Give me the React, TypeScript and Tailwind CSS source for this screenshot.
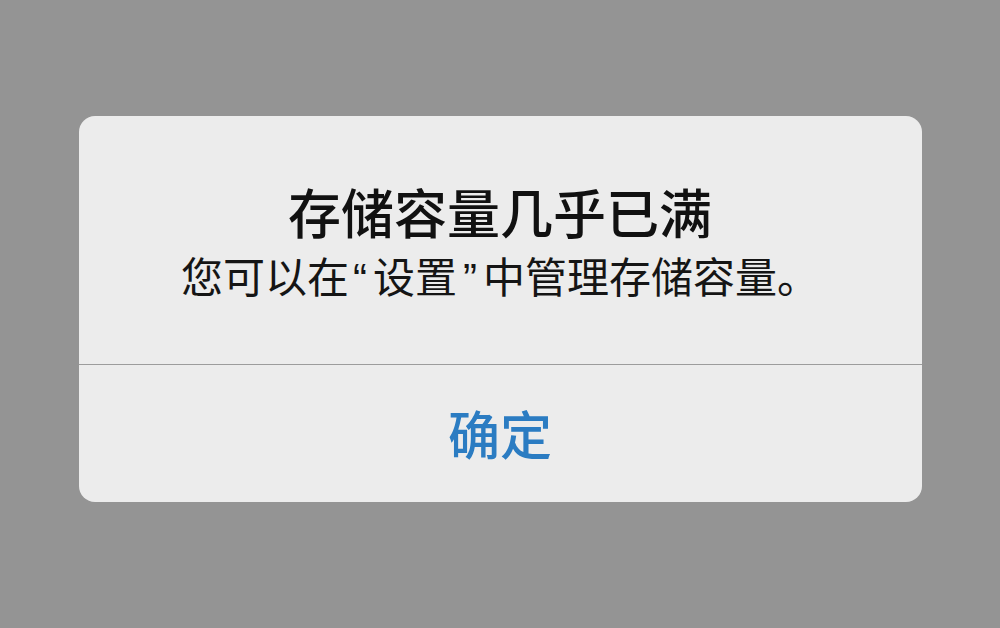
export default function App() {
  return (
    <div
      className="w-[1000px] h-[628px] bg-[#949494] flex items-start justify-center pt-[116px]"
      style={{ fontFamily: '"Noto Sans CJK SC", "Noto Sans", sans-serif' }}
    >
      <div className="w-[843px] h-[386px] bg-[#ececec] rounded-[16px] flex flex-col overflow-hidden">
        <div className="h-[248px] flex flex-col items-center pt-[60px]">
          <div className="text-[53px] leading-[70px] text-[#111] font-medium">存储容量几乎已满</div>
          <div className="text-[42px] leading-[56px] text-[#151515] mt-[1px]">
            您可以在
            <span className="font-['Liberation_Sans'] pl-[4px] pr-[6px]">“</span>
            设置
            <span className="font-['Liberation_Sans'] pl-[6px] pr-[6px]">”</span>
            中管理存储容量。
          </div>
        </div>
        <div className="h-px bg-[#9c9c9c]" />
        <div className="flex-1 flex items-center justify-center pb-[2px]">
          <span className="text-[52px] leading-[70px] text-[#2b7cc2] font-medium">确定</span>
        </div>
      </div>
    </div>
  );
}
